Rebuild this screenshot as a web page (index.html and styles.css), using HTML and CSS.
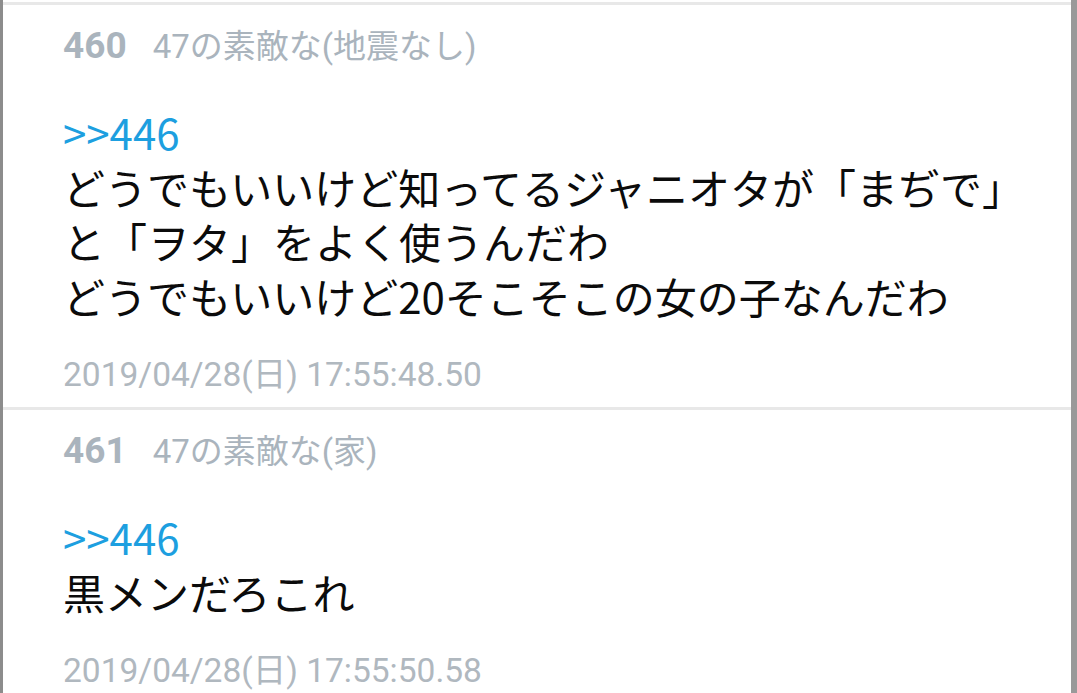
FILE: index.html
```html
<!DOCTYPE html>
<html lang="ja">
<head>
    <meta charset="UTF-8">
    <meta name="viewport" content="width=device-width, initial-scale=1.0">
    <title>スレッド</title>
    <link rel="stylesheet" href="styles.css">
</head>
<body>
    <div class="thread">
        <div class="post">
            <div class="post-head">
                <span class="post-no">460</span>
                <span class="post-name">47の素敵な(地震なし)</span>
            </div>
            <div class="post-body">
                <a class="anchor" href="#">&gt;&gt;446</a><br>
                どうでもいいけど知ってるジャニオタが「まぢで」<br>
                と「ヲタ」をよく使うんだわ<br>
                どうでもいいけど20そこそこの女の子なんだわ
            </div>
            <div class="post-date">2019/04/28(日) 17:55:48.50</div>
        </div>
        <div class="post">
            <div class="post-head">
                <span class="post-no">461</span>
                <span class="post-name">47の素敵な(家)</span>
            </div>
            <div class="post-body">
                <a class="anchor" href="#">&gt;&gt;446</a><br>
                黒メンだろこれ
            </div>
            <div class="post-date">2019/04/28(日) 17:55:50.58</div>
        </div>
    </div>
</body>
</html>
```

FILE: styles.css
```css
/* Thread view */
body {
    margin: 0;
    background: #fff;
    font-family: Roboto, "Noto Sans CJK JP", sans-serif;
    overflow: hidden;
}

.thread {
    height: 100vh;
    box-sizing: border-box;
    padding-top: 2px;
    border-left: 3px solid #8c8c8c;
    border-right: 6px solid #999;
}

.post {
    border-top: 3px solid #e8e8e8;
    padding: 16px 0 10px 60px;
}

.post-head {
    display: flex;
    align-items: baseline;
    gap: 26px;
    line-height: 50px;
    color: #aab4bd;
}

.post-no {
    font-size: 37px;
    font-weight: bold;
}

.post-name {
    font-size: 33px;
}

.post-body {
    margin-top: 33px;
    font-family: "Noto Sans CJK JP", sans-serif;
    font-size: 42px;
    line-height: 54.5px;
    color: #0b0b0b;
    white-space: nowrap;
}

.anchor {
    color: #1d9fe0;
    text-decoration: none;
}

.post-date {
    margin-top: 30px;
    font-size: 33.5px;
    line-height: 44px;
    color: #b0b8bf;
}
```
